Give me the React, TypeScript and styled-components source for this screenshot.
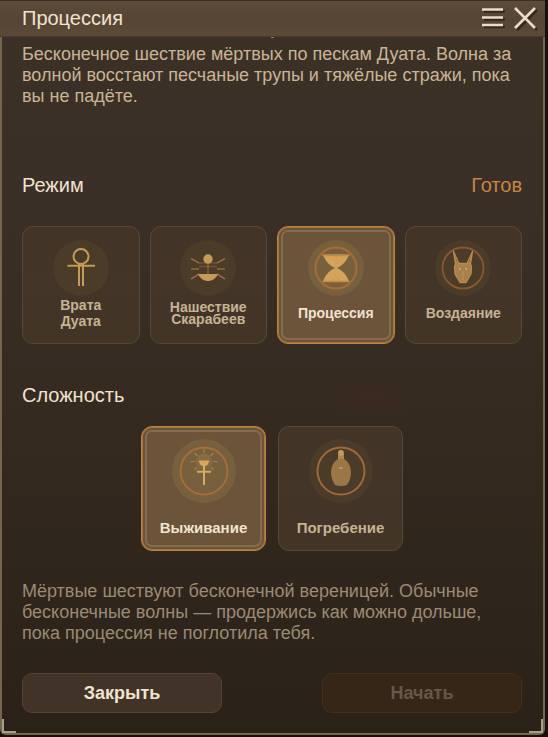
import React, { useState } from "react";
import styled, { createGlobalStyle, css } from "styled-components";

const GlobalStyle = createGlobalStyle`
  * { box-sizing: border-box; }
  html, body, #root { height: 100%; }
  body {
    margin: 0;
    background: #16110e;
    font-family: "Liberation Sans", Arial, sans-serif;
  }
  button { font-family: inherit; cursor: pointer; }
  h1, h2, p { margin: 0; font-weight: 400; }
`;

const Screen = styled.div`
  display: flex;
  min-height: 100%;
  padding: 0 3px 2px 0;
`;

const Dialog = styled.main`
  position: relative;
  flex: 1;
  display: flex;
  flex-direction: column;
  border-radius: 0 0 6px 6px;
  background:
    radial-gradient(ellipse 60px 20px at 68% 54%, rgba(84, 38, 26, 0.2), transparent),
    linear-gradient(#3c3127 0%, #3a2f26 30%, #33291f 62%, #2d241b 85%, #2a2118 100%);
`;

const Header = styled.header`
  display: flex;
  align-items: center;
  justify-content: space-between;
  height: 37px;
  padding: 0 8px 1px 22px;
  border-top: 1px solid #3c2f27;
  border-bottom: 1px solid #4a3b2e;
  background: linear-gradient(#5b4b38, #564534 55%, #5c4a39);
`;

const Title = styled.h1`
  color: #f0e3cf;
  font-size: 20px;
  line-height: 24px;
`;

const HeaderActions = styled.div`
  display: flex;
  gap: 8px;
`;

const IconButton = styled.button`
  display: flex;
  padding: 0;
  border: 0;
  background: none;
  color: #eadcc8;
  filter: drop-shadow(2px 2px 0 #33281f);
`;

const Body = styled.div`
  flex: 1;
  display: flex;
  flex-direction: column;
  padding: 7px 21px 20px 20px;
  border: solid #75654c;
  border-width: 0 2px 2px 2px;
  border-radius: 0 0 6px 6px;
`;

const Marker = styled.i`
  position: absolute;
  top: 37px;
  left: 50%;
  width: 3px;
  height: 1px;
  margin-left: -2px;
  background: #a87440;
`;

const Corner = styled.i<{ $side: "left" | "right" }>`
  position: absolute;
  bottom: 2px;
  ${(p) => p.$side}: 2px;
  width: 14px;
  height: 14px;
  border: solid #a99d8c;
  border-width: ${(p) => (p.$side === "left" ? "0 0 2px 2px" : "0 2px 2px 0")};
`;

const Description = styled.p<{ $dim?: boolean }>`
  min-height: ${(p) => (p.$dim ? 66 : 129)}px;
  color: ${(p) => (p.$dim ? "#9b8b73" : "#c9b596")};
  font-size: 18px;
  line-height: 21px;
`;

const SectionHead = styled.div`
  display: flex;
  align-items: center;
  justify-content: space-between;
  line-height: 24px;
  font-size: 20px;
`;

const SectionTitle = styled.h2`
  color: #f0e3cf;
  font-size: 20px;
`;

const Status = styled.span`
  color: #c9853f;
`;

const ModeGrid = styled.div`
  display: grid;
  grid-template-columns: repeat(4, 1fr);
  gap: 10px;
  margin: 29px 0 39px;
`;

const DifficultyGrid = styled.div`
  display: grid;
  grid-template-columns: repeat(2, 25%);
  justify-content: center;
  gap: 12px;
  margin: 19px 0 30px;
`;

const Card = styled.button<{ $large?: boolean }>`
  display: flex;
  flex-direction: column;
  align-items: center;
  aspect-ratio: 1;
  padding: ${(p) => (p.$large ? 12 : 13)}px 0 0;
  border: 1px solid #56483a;
  border-radius: 11px;
  background: linear-gradient(#433428, #423526);
  color: #c6b393;
  font-size: ${(p) => (p.$large ? 15 : 14)}px;
  font-weight: 700;

  &[aria-pressed="true"] {
    border-color: #bd843f;
    background: #6b543a;
    color: #f0e3cf;
    box-shadow: inset 0 0 0 1px #a9733a, inset 0 0 0 3px #6b543a, inset 0 0 0 5px #846c4c;
  }
`;

const CardLabel = styled.span<{ $large?: boolean; $tight?: boolean }>`
  display: flex;
  align-items: center;
  height: ${(p) => (p.$large ? 47 : 34)}px;
  padding-top: ${(p) => (p.$large ? 4 : 0)}px;
  line-height: ${(p) => (p.$tight ? 12 : 16)}px;
  text-align: center;
  white-space: pre-line;
`;

const Emblem = styled.svg<{ $active: boolean }>`
  flex: none;
  border-radius: 50%;
  background: ${(p) => (p.$active ? "#77603d" : "#4b3b29")};
`;

const Footer = styled.footer`
  display: flex;
  justify-content: space-between;
  margin-top: auto;
`;

const ActionButton = styled.button`
  width: 40%;
  height: 40px;
  border: 1px solid #524537;
  border-radius: 10px;
  background: #423328;
  color: #f0e3cf;
  font-size: 18px;
  font-weight: 700;

  ${(p) =>
    p.disabled &&
    css`
      border-color: #432f1d;
      background: #352617;
      color: #66584a;
      cursor: default;
    `}
`;

const GOLD = "#c59b55";
const COPPER = "#a0683a";

const Ankh = () => (
  <g fill="none" stroke={GOLD} strokeWidth="2">
    <circle cy="-11.5" r="7.5" />
    <path d="M-13.5 -2.3H14M-2 -4V18M2 -4V18" />
  </g>
);

const Scarab = () => (
  <g>
    <path d="M-9 -5H9M-9 -1.5H9" stroke="#74522f" strokeWidth="1.5" />
    <path
      d="M-17 -9.5-9 -5M-17 1H-9M-17 11-9 6M17 -9.5 9 -5M17 1H9M17 11 9 6"
      stroke="#8d6a3b"
      strokeWidth="1.5"
    />
    <path d="M0 -5V6" stroke="#9b7440" />
    <circle cy="-9" r="4.7" fill={GOLD} />
    <path d="M-10 6H10C8 10.5 4 13 0 13S-8 10.5-10 6Z" fill={GOLD} />
  </g>
);

const Hourglass = () => (
  <g>
    <circle r="20.5" fill="none" stroke="#a96d3a" strokeWidth="1.8" />
    <path d="M-13 -13.5H13C11 -7 6 -2 1 0C6 2 11 7 13 13.5H-13C-11 7-6 2-1 0C-6 -2-11 -7-13 -13.5Z" fill="#d3a558" />
    <path d="M-3 -13H3L2 -6 0 -2-2 -6ZM-5 13 0 5 5 13Z" fill="#d99e50" />
    <path d="M-13 -12.5H13M-13 13.5H13" stroke="#c18b49" strokeWidth="1.6" strokeLinecap="round" />
  </g>
);

const Jackal = () => (
  <g>
    <circle r="20.5" fill="none" stroke="#885830" strokeWidth="1.8" />
    <path
      d="M-9.5 -16.5-4 -4.5H4L9.5 -16.5 7.5 -4 8.5 -1 8 6 3 14.5H-3L-8 6-8.5 -1-7.5 -4Z"
      fill="#a9804b"
      stroke="#b88d4e"
      strokeWidth="1.3"
      strokeLinejoin="round"
    />
    <path d="M-6.5 -7-9 -15-5 -5ZM6.5 -7 9 -15 5 -5Z" fill="#80603a" />
    <path d="M0 3V12" stroke="#bc9153" />
    <circle cx="-3.3" cy="1" r="0.9" fill="#dab878" />
    <circle cx="3.3" cy="1" r="0.9" fill="#dab878" />
  </g>
);

const Torch = () => (
  <g>
    <circle r="23.5" fill="none" stroke="#a96d3a" strokeWidth="1.8" />
    <circle cy="-9.5" r="8" fill="#866b43" />
    <path
      d="M-13.5 -9.5H-9M13.5 -9.5H9M-9.5 -18-6.5 -15M9.5 -18 6.5 -15M0 -22.5V-18M-9.5 -1-7 -3.5M9.5 -1 7 -3.5"
      stroke="#a58149"
      strokeWidth="1.2"
    />
    <path d="M-5 -10.5H5C5 -7 3 -5.5 1 -5V14H-1V-5C-3 -5.5-5 -7-5 -10.5Z" fill="#d7ab60" />
    <path d="M-7 .8H7" stroke="#d7ab60" strokeWidth="2" />
    <circle cy="-8.5" r="1.5" fill="#df9b52" />
  </g>
);

const Urn = () => (
  <g>
    <circle r="23.5" fill="none" stroke={COPPER} strokeWidth="2" />
    <path d="M-3 -12C-8 -9-10 -4-10 2C-10 7-8 11-6 14Q-3 15 0 15T6 14C8 11 10 7 10 2C10 -4 8 -9 3 -12Z" fill="#9b7646" />
    <path d="M-3 -12V-18Q-3 -21 0 -21T3 -18V-12Z" fill="#ad874d" />
    <ellipse cy="-18" rx="2.5" ry="3" fill="#c49b58" />
    <ellipse cy="-3" rx="2" ry="1" fill="#c49b58" />
  </g>
);

const modes = [
  { id: "gates", label: "Врата\nДуата", Icon: Ankh },
  { id: "scarabs", label: "Нашествие\nСкарабеев", Icon: Scarab, tight: true },
  { id: "procession", label: "Процессия", Icon: Hourglass },
  { id: "retribution", label: "Воздаяние", Icon: Jackal },
];

const difficulties = [
  { id: "survival", label: "Выживание", Icon: Torch },
  { id: "burial", label: "Погребение", Icon: Urn },
];

type OptionProps = {
  label: string;
  Icon: () => React.ReactElement;
  active: boolean;
  large?: boolean;
  tight?: boolean;
  onSelect: () => void;
};

function OptionCard({ label, Icon, active, large, tight, onSelect }: OptionProps) {
  const size = large ? 64 : 56;
  return (
    <Card type="button" $large={large} aria-pressed={active} onClick={onSelect}>
      <Emblem
        $active={active}
        width={size}
        height={size}
        viewBox={`${-size / 2} ${-size / 2} ${size} ${size}`}
        aria-hidden="true"
      >
        <Icon />
      </Emblem>
      <CardLabel $large={large} $tight={tight}>{label}</CardLabel>
    </Card>
  );
}

export default function App() {
  const [mode, setMode] = useState("procession");
  const [difficulty, setDifficulty] = useState("survival");

  return (
    <Screen>
      <GlobalStyle />
      <Dialog>
        <Header>
          <Title>Процессия</Title>
          <HeaderActions>
            <IconButton type="button" aria-label="Меню">
              <svg width="24" height="24" viewBox="0 0 24 24">
                <path d="M1 3.5H22M1 11.5H22M1 19H22" stroke="currentColor" strokeWidth="2.6" />
              </svg>
            </IconButton>
            <IconButton type="button" aria-label="Закрыть окно">
              <svg width="24" height="24" viewBox="0 0 24 24">
                <path d="M2 2 22 22M22 2 2 22" stroke="currentColor" strokeWidth="2.6" />
              </svg>
            </IconButton>
          </HeaderActions>
        </Header>
        <Marker />
        <Body>
          <Description>
            Бесконечное шествие мёртвых по пескам Дуата. Волна за волной восстают песчаные
            трупы и тяжёлые стражи, пока вы не падёте.
          </Description>
          <SectionHead>
            <SectionTitle>Режим</SectionTitle>
            <Status>Готов</Status>
          </SectionHead>
          <ModeGrid>
            {modes.map(({ id, ...option }) => (
              <OptionCard key={id} {...option} active={mode === id} onSelect={() => setMode(id)} />
            ))}
          </ModeGrid>
          <SectionHead>
            <SectionTitle>Сложность</SectionTitle>
          </SectionHead>
          <DifficultyGrid>
            {difficulties.map(({ id, ...option }) => (
              <OptionCard
                key={id}
                {...option}
                large
                active={difficulty === id}
                onSelect={() => setDifficulty(id)}
              />
            ))}
          </DifficultyGrid>
          <Description $dim>
            Мёртвые шествуют бесконечной вереницей. Обычные бесконечные волны — продержись как
            можно дольше, пока процессия не поглотила тебя.
          </Description>
          <Footer>
            <ActionButton type="button">Закрыть</ActionButton>
            <ActionButton type="button" disabled>Начать</ActionButton>
          </Footer>
        </Body>
        <Corner $side="left" />
        <Corner $side="right" />
      </Dialog>
    </Screen>
  );
}
